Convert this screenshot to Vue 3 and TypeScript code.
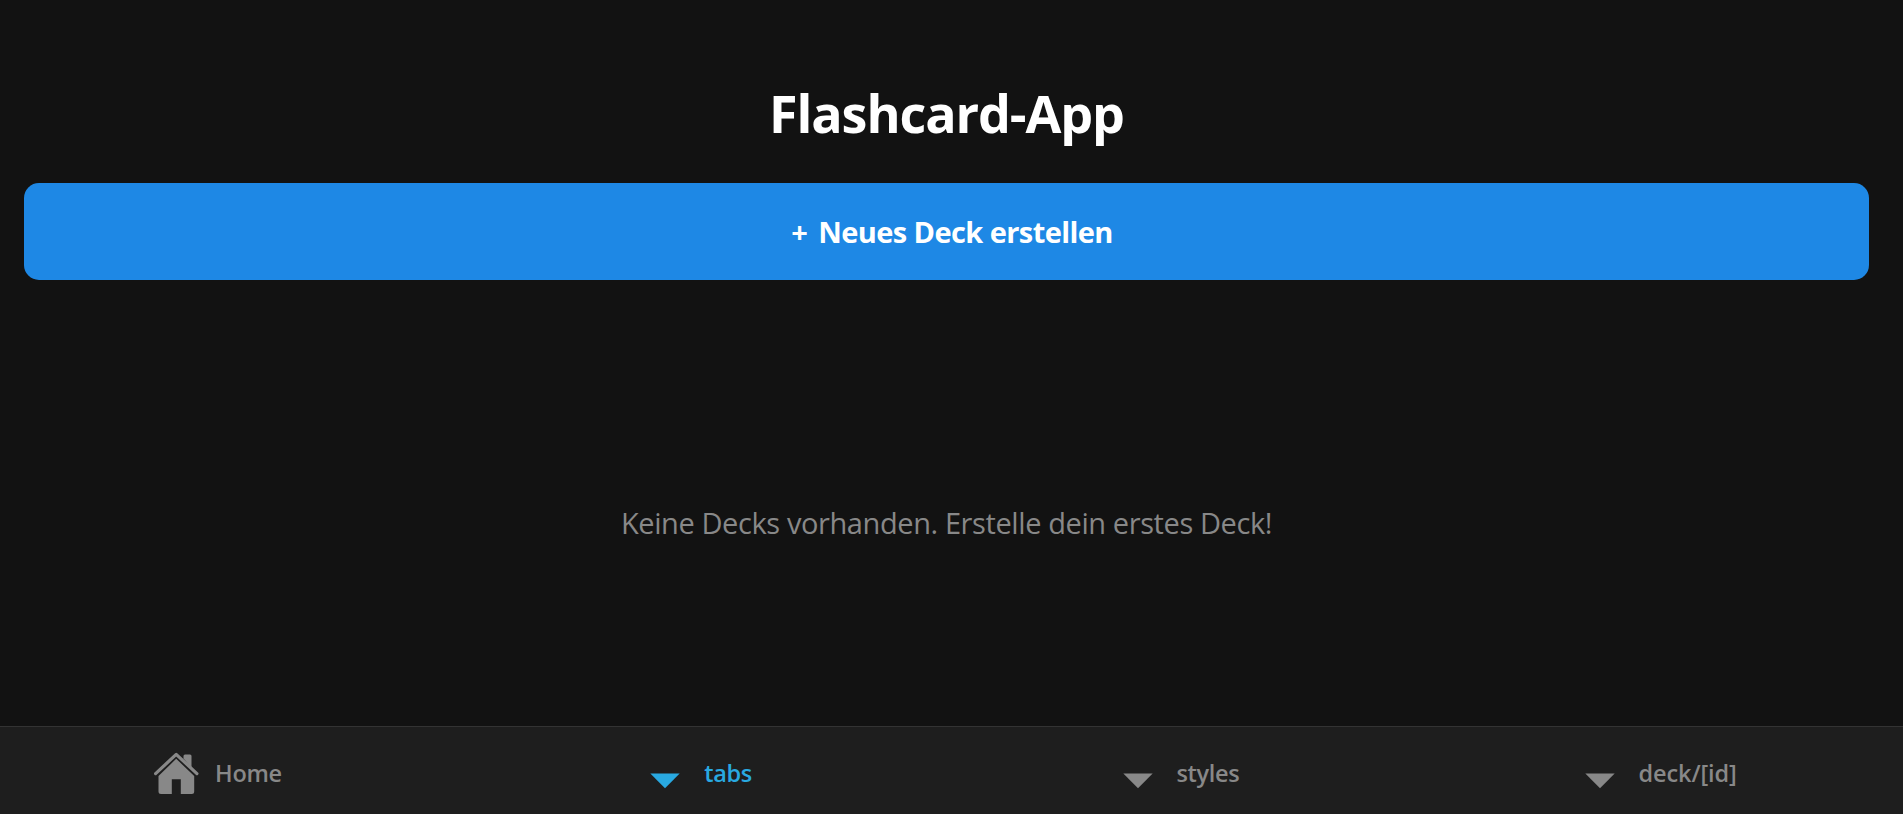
<script setup lang="ts">
interface Tab {
  name: string
  label: string
  icon: 'home' | 'arrow'
  active: boolean
}

const tabs: Tab[] = [
  { name: 'home', label: 'Home', icon: 'home', active: false },
  { name: 'tabs', label: 'tabs', icon: 'arrow', active: true },
  { name: 'styles', label: 'styles', icon: 'arrow', active: false },
  { name: 'deck', label: 'deck/[id]', icon: 'arrow', active: false },
]
</script>

<template>
  <div class="app">
    <main class="screen">
      <h1 class="title">Flashcard-App</h1>
      <button class="create" type="button"><span class="plus">+</span> Neues Deck erstellen</button>
      <p class="empty">Keine Decks vorhanden. Erstelle dein erstes Deck!</p>
    </main>
    <nav class="tabbar">
      <a v-for="tab in tabs" :key="tab.name" class="tab" :class="[tab.name, { active: tab.active }]">
        <svg v-if="tab.icon === 'home'" class="icon" viewBox="0 0 48 48">
          <path d="M31.500 9.500V7q0-1.500 1.500-1.500h5q1.500 0 1.500 1.500v12z" />
          <path class="roof" d="M3.600 24.600 24.200 5.400l20.700 19.200" />
          <path d="M24.200 9.800 42.200 27v15.500q0 2.500-2.500 2.500H28.800V30.300h-9V45H9q-2.500 0-2.500-2.500V27z" />
        </svg>
        <svg v-else class="icon" viewBox="0 0 48 48">
          <path d="M9.300 24.500h29.400L24 39.200z" />
        </svg>
        <span class="label">{{ tab.label }}</span>
      </a>
    </nav>
  </div>
</template>

<style>
body {
  margin: 0;
  background: #121212;
}
</style>

<style scoped>
.app {
  display: flex;
  flex-direction: column;
  height: 814px;
  overflow: hidden;
  background: #121212;
  font-family: "Segoe UI", "Open Sans", "Noto Sans", sans-serif;
}
.screen {
  display: flex;
  flex: 1;
  flex-direction: column;
  width: 1845px;
  padding: 77px 34px 0 24px;
}
.title {
  margin: 0 0 34px;
  color: #fff;
  font-size: 52px;
  font-weight: 700;
  line-height: 72px;
  text-align: center;
  letter-spacing: -1.080px;
}
.create {
  height: 97px;
  padding: 0 0 0 11px;
  border: 0;
  border-radius: 15px;
  background: #1e88e5;
  color: #fff;
  font: inherit;
  font-size: 29px;
  font-weight: 700;
  line-height: 97px;
  letter-spacing: -0.580px;
}
.plus {
  margin-right: 4px;
}
.empty {
  margin: 223px 0 0;
  color: #888;
  font-size: 29px;
  line-height: 40px;
  text-align: center;
  letter-spacing: -0.400px;
}
.tabbar {
  display: grid;
  flex: none;
  grid-template-columns: repeat(4, 1fr);
  width: 1919px;
  height: 87px;
  border-top: 1px solid #333;
  background: #1e1e1e;
}
.tab {
  display: flex;
  align-items: center;
  justify-content: center;
  padding: 0 0 1px 1px;
  color: #888;
  font-size: 23.500px;
  font-weight: 600;
  letter-spacing: -0.350px;
}
.tab.active {
  color: #29a9e1;
}
.tab.deck {
  letter-spacing: -0.100px;
}
.icon {
  flex: none;
  width: 48px;
  height: 48px;
  margin: 6px 15px 0 -47px;
  fill: currentColor;
}
.roof {
  fill: none;
  stroke: currentColor;
  stroke-width: 3.200;
  stroke-linecap: round;
  stroke-linejoin: round;
}
.label {
  margin-top: 6px;
  white-space: nowrap;
}
</style>
